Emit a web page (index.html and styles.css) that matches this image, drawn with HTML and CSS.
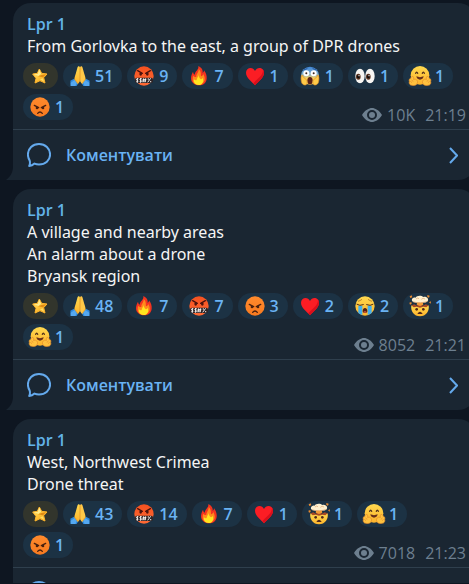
FILE: index.html
```html
<!DOCTYPE html>
<html lang="uk">
<head>
  <meta charset="UTF-8">
  <meta name="viewport" content="width=device-width, initial-scale=1.0">
  <title>Lpr 1</title>
  <link rel="stylesheet" href="styles.css">
</head>
<body>
  <!-- Shared drawings -->
  <svg class="defs" aria-hidden="true">
    <defs>
      <linearGradient id="gold" x1="0" y1="0" x2="0" y2="1">
        <stop offset="0" stop-color="#ffd94f"/>
        <stop offset="1" stop-color="#fdb32b"/>
      </linearGradient>
      <linearGradient id="starFill" x1="0" y1="0" x2="1" y2="1">
        <stop offset="0" stop-color="#fff08a"/>
        <stop offset="0.5" stop-color="#ffc53a"/>
        <stop offset="1" stop-color="#f39a14"/>
      </linearGradient>
      <linearGradient id="orange" x1="0" y1="0" x2="0" y2="1">
        <stop offset="0" stop-color="#ff8a2c"/>
        <stop offset="1" stop-color="#f77a20"/>
      </linearGradient>
      <linearGradient id="redFace" x1="0" y1="0" x2="0" y2="1">
        <stop offset="0" stop-color="#f4511f"/>
        <stop offset="1" stop-color="#ff6a35"/>
      </linearGradient>
      <linearGradient id="fear" x1="0" y1="0" x2="0" y2="1">
        <stop offset="0" stop-color="#3f86d8"/>
        <stop offset="0.4" stop-color="#7fb0cf"/>
        <stop offset="0.65" stop-color="#ffd055"/>
      </linearGradient>

      <g id="star">
        <path d="M28 9 L35 22 L51 24 L41 35 L45 51 L30 44 L15 51 L18 37 L8 24 L22 22 Z" fill="url(#starFill)" stroke="#ffb52c" stroke-width="3" stroke-linejoin="round"/>
        <path d="M28 11 L33 23 L25 30 L12 24 L23 24 Z" fill="#ffeb8c"/>
        <path d="M35 27 L48 25 L39 34 L24 31 Z" fill="#e08a14"/>
        <path d="M30 40 L42 48 L39 37 Z" fill="#ffdf62"/>
      </g>

      <g id="pray">
        <path d="M1 44 L12 38 L24 53 L20 60 L2 60 Z" fill="#2d8ae0"/>
        <path d="M59 44 L48 38 L36 53 L40 60 L58 60 Z" fill="#2d8ae0"/>
        <path d="M2 50 L14 42 L20 52 L16 60 L2 60 Z" fill="#55a8f0"/>
        <path d="M58 50 L46 42 L40 52 L44 60 L58 60 Z" fill="#55a8f0"/>
        <path d="M30 3 C26 -1 23 1 22 6 L17 24 C14 31 14 36 13 40 L23 54 C28 50 30 47 30 43 Z" fill="url(#gold)"/>
        <path d="M30 3 C34 -1 37 1 38 6 L43 24 C46 31 46 36 47 40 L37 54 C32 50 30 47 30 43 Z" fill="#ffc847"/>
        <path d="M30 3 V46" stroke="#d98a22" stroke-width="2"/>
        <path d="M15 40 L24 52 M45 40 L36 52" stroke="#e89c2a" stroke-width="2" fill="none"/>
      </g>

      <g id="swear">
        <circle cx="30" cy="30" r="29" fill="url(#redFace)"/>
        <path d="M11 14 L25 22 M49 14 L35 22" stroke="#4c130d" stroke-width="4" stroke-linecap="round"/>
        <ellipse cx="20" cy="24" rx="4" ry="5" fill="#4c130d"/>
        <ellipse cx="40" cy="24" rx="4" ry="5" fill="#4c130d"/>
        <rect x="3" y="35" width="54" height="16" rx="5" fill="#2e2426"/>
        <path d="M13 38 C7 37 6 42 10 43 C14 44 13 49 7 47 M10 36 V50 M23 38 C17 37 16 42 20 43 C24 44 23 49 17 47 M20 36 V50 M29 37 L27 49 M35 37 L33 49 M26 41 H37 M25 45 H36 M50 37 L41 49" stroke="#f4f1ee" stroke-width="3" fill="none"/>
        <circle cx="43" cy="39" r="2" fill="#f4f1ee"/>
        <circle cx="50" cy="47" r="2" fill="#f4f1ee"/>
      </g>

      <g id="fire">
        <path d="M28 0 C39 5 42 13 41 21 C44 19 45 16 45 13 C51 20 54 30 53 38 C52 51 42 58 30 58 C17 58 6 50 6 37 C6 29 9 23 12 17 C13 22 14 24 17 26 C18 15 30 12 28 0 Z" fill="#f5331f"/>
        <path d="M29 9 C37 16 35 25 36 31 C40 30 42 27 43 24 C48 34 48 40 46 45 C42 53 36 56 29 56 C18 56 10 49 11 38 C11 34 12 31 13 29 C16 33 19 34 22 33 C21 24 30 20 29 9 Z" fill="#ff8b1d"/>
        <path d="M29 27 C30 35 33 38 36 40 C39 39 40 37 41 35 C45 45 41 57 29 57 C18 57 13 49 15 40 C18 43 20 43 23 42 C23 36 28 34 29 27 Z" fill="#ffe51f"/>
      </g>

      <g id="heart">
        <path d="M30 58 C22 47 3 36 3 20 C3 4 24 1 30 15 C36 1 57 4 57 20 C57 36 38 47 30 58 Z" fill="#fb1d24"/>
        <path d="M30 58 C38 47 57 36 57 20 C57 16 56 13 54 11 C54 31 35 38 25 52 Z" fill="#d90f1b"/>
      </g>

      <g id="scream">
        <circle cx="30" cy="29" r="27" fill="url(#fear)"/>
        <path d="M11 12 L21 8 M49 12 L39 8" stroke="#2457a0" stroke-width="3" stroke-linecap="round"/>
        <circle cx="19" cy="22" r="9" fill="#fff"/>
        <circle cx="41" cy="22" r="9" fill="#fff"/>
        <circle cx="19" cy="22" r="3" fill="#41291c"/>
        <circle cx="41" cy="22" r="3" fill="#41291c"/>
        <ellipse cx="30" cy="44" rx="8" ry="11" fill="#5b2015"/>
        <path d="M5 28 C2 35 3 44 5 50 C8 57 18 60 21 53 C23 45 18 38 13 36 C10 34 8 32 8 28 Z" fill="#ffcb49" stroke="#dc8c28" stroke-width="2"/>
        <path d="M55 28 C58 35 57 44 55 50 C52 57 42 60 39 53 C37 45 42 38 47 36 C50 34 52 32 52 28 Z" fill="#ffcb49" stroke="#dc8c28" stroke-width="2"/>
      </g>

      <g id="eyes">
        <ellipse cx="15" cy="30" rx="14" ry="22" fill="#f7f5f2"/>
        <ellipse cx="45" cy="30" rx="14" ry="22" fill="#f7f5f2"/>
        <ellipse cx="10" cy="32" rx="7" ry="9" fill="#5b321f"/>
        <ellipse cx="40" cy="32" rx="7" ry="9" fill="#5b321f"/>
        <ellipse cx="10" cy="32" rx="4" ry="5" fill="#120b09"/>
        <ellipse cx="40" cy="32" rx="4" ry="5" fill="#120b09"/>
        <circle cx="12" cy="29" r="2" fill="#fff"/>
        <circle cx="42" cy="29" r="2" fill="#fff"/>
      </g>

      <g id="hug">
        <circle cx="30" cy="28" r="28" fill="url(#gold)"/>
        <path d="M17 22 Q20 15 23 22 M37 22 Q40 15 43 22" stroke="#51301b" stroke-width="4" fill="none" stroke-linecap="round"/>
        <path d="M19 31 Q30 36 41 31 Q39 41 30 41 Q21 41 19 31 Z" fill="#69301a"/>
        <path d="M9 31 C12 34 11 38 11 41 C17 37 22 42 23 48 C22 57 14 60 6 58 C-1 58 -4 52 -2 46 C-4 41 -1 37 2 38 C2 34 5 31 9 31 Z" fill="#ffc23f" stroke="#e28b2c" stroke-width="2"/>
        <path d="M51 31 C48 34 49 38 49 41 C43 37 38 42 37 48 C38 57 46 60 54 58 C61 58 64 52 62 46 C64 41 61 37 58 38 C58 34 55 31 51 31 Z" fill="#ffc23f" stroke="#e28b2c" stroke-width="2"/>
        <path d="M1 46 L6 50 M5 41 L9 47 M59 46 L54 50 M55 41 L51 47" stroke="#e28b2c" stroke-width="2"/>
      </g>

      <g id="angry">
        <circle cx="30" cy="30" r="29" fill="url(#orange)"/>
        <path d="M13 25 L26 32 M47 25 L34 32" stroke="#48200f" stroke-width="4" stroke-linecap="round"/>
        <circle cx="21" cy="33" r="4" fill="#48200f"/>
        <circle cx="39" cy="33" r="4" fill="#48200f"/>
        <path d="M23 49 Q30 41 37 49" stroke="#48200f" stroke-width="4" fill="none" stroke-linecap="round"/>
      </g>

      <g id="cry">
        <circle cx="30" cy="30" r="29" fill="url(#gold)"/>
        <path d="M9 16 Q16 14 21 10 M51 16 Q44 14 39 10" stroke="#9a5c20" stroke-width="2" fill="none"/>
        <path d="M10 29 H22 V57 Q15 56 10 51 Z M38 29 H50 V51 Q45 56 38 57 Z" fill="#42b0ee"/>
        <path d="M6 25 Q14 31 25 26 M54 25 Q46 31 35 26" stroke="#51301b" stroke-width="3" fill="none" stroke-linecap="round"/>
        <path d="M23 46 C23 33 37 33 37 46 C37 53 23 53 23 46 Z" fill="#55200f"/>
        <path d="M25 48 Q30 43 35 48 Q30 52 25 48 Z" fill="#f4604b"/>
      </g>

      <g id="mindblown">
        <path d="M4 28 C8 31 52 31 56 28 C59 46 48 61 30 61 C12 61 1 46 4 28 Z" fill="url(#gold)"/>
        <path d="M4 28 L13 25 L20 29 L30 24 L39 29 L47 25 L56 28 L49 34 L40 32 L30 35 L20 32 L11 34 Z" fill="#a84925"/>
        <path d="M20 26 L22 17 H38 L40 26 L30 30 Z" fill="#f49a36"/>
        <path d="M7 16 C2 8 12 3 17 5 C20 -2 34 -3 40 3 C49 0 58 8 53 16 C48 22 38 18 31 20 C22 19 12 22 7 16 Z" fill="#fff0cf"/>
        <path d="M9 17 C19 22 41 21 52 16 M18 9 Q22 4 27 8 M34 10 Q39 4 45 9" stroke="#dfa56c" stroke-width="2" fill="none"/>
        <path d="M-1 1 L5 -2 L7 4 L1 6 Z M-2 20 L4 18 L5 24 L0 26 Z M52 -3 L59 -1 L57 5 L52 3 Z M57 19 L63 16 L62 23 Z" fill="#e88a31"/>
        <circle cx="20" cy="40" r="4" fill="#51291a"/>
        <circle cx="40" cy="40" r="4" fill="#51291a"/>
        <path d="M22 54 Q30 41 38 54 Z" fill="#51291a"/>
      </g>

      <g id="eye">
        <path fill-rule="evenodd" d="M0 7 C3 2 7 0 10 0 C13 0 17 2 20 7 C17 12 13 14 10 14 C7 14 3 12 0 7 Z M10 2 A5 5 0 1 0 10 12 A5 5 0 1 0 10 2 Z"/>
        <circle cx="10" cy="7" r="3"/>
      </g>

      <path id="bubble" d="M2.6 17.4 C1.4 15.5 0.9 13.6 0.9 11.5 C0.9 5.6 5.7 1 12 1 C18.3 1 23.1 5.6 23.1 11.5 C23.1 17.4 18.3 21.5 12 21.5 C10.4 21.5 8.9 21.2 7.5 20.6 C6 22 4.2 22.9 2.2 23 C3 21.3 3.2 19.3 2.6 17.4 Z"/>
      <path id="chevron" d="M1 1 L8 8.5 L1 16"/>
      <path id="tail" d="M7 0 C7 6 5 10 0 14 H7 Z"/>
    </defs>
  </svg>

  <main class="chat">
    <article class="post">
      <div class="post-body">
        <h2 class="author">Lpr 1</h2>
        <p class="message">From Gorlovka to the east, a group of DPR drones</p>
        <div class="reactions">
          <button class="reaction paid" aria-label="Star"><svg class="emoji" viewBox="0 0 60 60"><use href="#star"/></svg></button>
          <button class="reaction"><svg class="emoji" viewBox="0 0 60 60"><use href="#pray"/></svg>51</button>
          <button class="reaction"><svg class="emoji" viewBox="0 0 60 60"><use href="#swear"/></svg>9</button>
          <button class="reaction"><svg class="emoji" viewBox="0 0 60 60"><use href="#fire"/></svg>7</button>
          <button class="reaction"><svg class="emoji" viewBox="0 0 60 60"><use href="#heart"/></svg>1</button>
          <button class="reaction"><svg class="emoji" viewBox="0 0 60 60"><use href="#scream"/></svg>1</button>
          <button class="reaction"><svg class="emoji" viewBox="0 0 60 60"><use href="#eyes"/></svg>1</button>
          <button class="reaction"><svg class="emoji" viewBox="0 0 60 60"><use href="#hug"/></svg>1</button>
          <button class="reaction"><svg class="emoji" viewBox="0 0 60 60"><use href="#angry"/></svg>1</button>
          <div class="meta">
            <svg class="views-icon" viewBox="0 0 20 14"><use href="#eye"/></svg>
            <span class="views">10K</span>
            <time>21:19</time>
          </div>
        </div>
      </div>
      <a class="comments" href="#">
        <svg class="comment-icon" viewBox="0 0 24 24"><use href="#bubble"/></svg>
        <span>Коментувати</span>
        <svg class="chevron" viewBox="0 0 9 17"><use href="#chevron"/></svg>
      </a>
      <svg class="tail" viewBox="0 0 7 14"><use href="#tail"/></svg>
    </article>

    <article class="post">
      <div class="post-body">
        <h2 class="author">Lpr 1</h2>
        <p class="message">A village and nearby areas<br>An alarm about a drone<br>Bryansk region</p>
        <div class="reactions">
          <button class="reaction paid" aria-label="Star"><svg class="emoji" viewBox="0 0 60 60"><use href="#star"/></svg></button>
          <button class="reaction"><svg class="emoji" viewBox="0 0 60 60"><use href="#pray"/></svg>48</button>
          <button class="reaction"><svg class="emoji" viewBox="0 0 60 60"><use href="#fire"/></svg>7</button>
          <button class="reaction"><svg class="emoji" viewBox="0 0 60 60"><use href="#swear"/></svg>7</button>
          <button class="reaction"><svg class="emoji" viewBox="0 0 60 60"><use href="#angry"/></svg>3</button>
          <button class="reaction"><svg class="emoji" viewBox="0 0 60 60"><use href="#heart"/></svg>2</button>
          <button class="reaction"><svg class="emoji" viewBox="0 0 60 60"><use href="#cry"/></svg>2</button>
          <button class="reaction"><svg class="emoji" viewBox="0 0 60 60"><use href="#mindblown"/></svg>1</button>
          <button class="reaction"><svg class="emoji" viewBox="0 0 60 60"><use href="#hug"/></svg>1</button>
          <div class="meta">
            <svg class="views-icon" viewBox="0 0 20 14"><use href="#eye"/></svg>
            <span class="views">8052</span>
            <time>21:21</time>
          </div>
        </div>
      </div>
      <a class="comments" href="#">
        <svg class="comment-icon" viewBox="0 0 24 24"><use href="#bubble"/></svg>
        <span>Коментувати</span>
        <svg class="chevron" viewBox="0 0 9 17"><use href="#chevron"/></svg>
      </a>
      <svg class="tail" viewBox="0 0 7 14"><use href="#tail"/></svg>
    </article>

    <article class="post">
      <div class="post-body">
        <h2 class="author">Lpr 1</h2>
        <p class="message">West, Northwest Crimea<br>Drone threat</p>
        <div class="reactions">
          <button class="reaction paid" aria-label="Star"><svg class="emoji" viewBox="0 0 60 60"><use href="#star"/></svg></button>
          <button class="reaction"><svg class="emoji" viewBox="0 0 60 60"><use href="#pray"/></svg>43</button>
          <button class="reaction"><svg class="emoji" viewBox="0 0 60 60"><use href="#swear"/></svg>14</button>
          <button class="reaction"><svg class="emoji" viewBox="0 0 60 60"><use href="#fire"/></svg>7</button>
          <button class="reaction"><svg class="emoji" viewBox="0 0 60 60"><use href="#heart"/></svg>1</button>
          <button class="reaction"><svg class="emoji" viewBox="0 0 60 60"><use href="#mindblown"/></svg>1</button>
          <button class="reaction"><svg class="emoji" viewBox="0 0 60 60"><use href="#hug"/></svg>1</button>
          <button class="reaction"><svg class="emoji" viewBox="0 0 60 60"><use href="#angry"/></svg>1</button>
          <div class="meta">
            <svg class="views-icon" viewBox="0 0 20 14"><use href="#eye"/></svg>
            <span class="views">7018</span>
            <time>21:23</time>
          </div>
        </div>
      </div>
      <a class="comments" href="#" aria-label="Коментувати">
        <svg class="comment-icon" viewBox="0 0 24 24"><use href="#bubble"/></svg>
      </a>
    </article>
  </main>
</body>
</html>
```

FILE: styles.css
```css
* {
  box-sizing: border-box;
}
body {
  margin: 0;
  height: 100vh;
  overflow: hidden;
  background: #0e1621;
  color: #f5f5f5;
  font-family: "Open Sans", "Noto Sans", sans-serif;
  font-size: 16px;
  line-height: 22px;
}
.defs {
  position: absolute;
  width: 0;
  height: 0;
}
.chat {
  display: flex;
  flex-direction: column;
  gap: 9px;
  height: 100%;
  padding: 3px 0 0 13px;
  margin-right: -7px;
  border-bottom: 1px solid #0e1621;
  overflow: hidden;
}
.post {
  position: relative;
  flex-shrink: 0;
  background: #1a2632;
  border-radius: 18px 18px 18px 0;
}
.post-body {
  padding: 10px 19px 9px 14px;
}
.author {
  margin: 0;
  font-size: 16px;
  font-weight: 600;
  color: #62b4e8;
}
.message {
  margin: 0;
  font-family: "Noto Sans", "Open Sans", sans-serif;
}
.reactions {
  display: flex;
  flex-wrap: wrap;
  gap: 5px;
  margin: 6px 0 0 -4px;
}
.reaction {
  display: flex;
  align-items: center;
  gap: 5px;
  height: 26px;
  padding: 0 9px 0 7px;
  border: none;
  border-radius: 13px;
  background: #1c3244;
  color: #6ab3f3;
  font-family: inherit;
  font-size: 16px;
  font-weight: 600;
  line-height: 22px;
  cursor: pointer;
}
.reaction.paid {
  padding-right: 8px;
  background: #32352c;
}
.emoji {
  width: 20px;
  height: 20px;
  overflow: visible;
}
.meta {
  display: flex;
  align-items: center;
  align-self: flex-end;
  margin: 0 -9px -6px auto;
  color: #6d7f8f;
}
.views-icon {
  width: 20px;
  height: 14px;
  margin-right: 5px;
  fill: #6d7f8f;
}
.views {
  margin-right: 10px;
}
.comments {
  display: flex;
  align-items: center;
  height: 51px;
  padding: 0 18px 0 14px;
  border-top: 1px solid #2f3f4d;
  color: #6ab3f3;
  font-weight: 600;
  text-decoration: none;
}
.comment-icon {
  width: 24px;
  height: 24px;
  margin-right: 15px;
  fill: none;
  stroke: #64a9ec;
  stroke-width: 2;
  stroke-linejoin: round;
}
.chevron {
  width: 9px;
  height: 17px;
  margin-left: auto;
  fill: none;
  stroke: #64a9ec;
  stroke-width: 2;
}
/* little corner that sticks out at the bottom left */
.tail {
  position: absolute;
  left: -7px;
  bottom: 0;
  width: 7px;
  height: 14px;
  fill: #1a2632;
}
```
